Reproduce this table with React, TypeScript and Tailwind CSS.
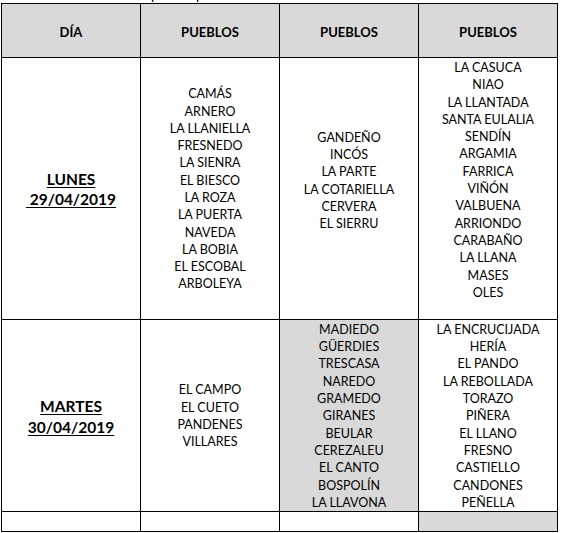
import React from "react";

const c2 = ["CAMÁS","ARNERO","LA LLANIELLA","FRESNEDO","LA SIENRA","EL BIESCO","LA ROZA","LA PUERTA","NAVEDA","LA BOBIA","EL ESCOBAL","ARBOLEYA"];
const c3 = ["GANDEÑO","INCÓS","LA PARTE","LA COTARIELLA","CERVERA","EL SIERRU"];
const c4 = ["LA CASUCA","NIAO","LA LLANTADA","SANTA EULALIA","SENDÍN","ARGAMIA","FARRICA","VIÑÓN","VALBUENA","ARRIONDO","CARABAÑO","LA LLANA","MASES","OLES"];
const d2 = ["EL CAMPO","EL CUETO","PANDENES","VILLARES"];
const d3 = ["MADIEDO","GÜERDIES","TRESCASA","NAREDO","GRAMEDO","GIRANES","BEULAR","CEREZALEU","EL CANTO","BOSPOLÍN","LA LLAVONA"];
const d4 = ["LA ENCRUCIJADA","HERÍA","EL PANDO","LA REBOLLADA","TORAZO","PIÑERA","EL LLANO","FRESNO","CASTIELLO","CANDONES","PEÑELLA"];

function List({ items }: { items: string[] }) {
  return (
    <>
      {items.map((t) => (
        <div key={t} className="leading-[17.3px] whitespace-nowrap">{t}</div>
      ))}
    </>
  );
}

const cell = "border-r border-b border-black flex flex-col items-center text-center";

export default function App() {
  return (
    <div className="w-[561px] h-[533px] bg-white text-black overflow-hidden" style={{ fontFamily: "Lato, 'Liberation Sans', sans-serif" }}>
      <div className="h-[3px] overflow-hidden">
        <div className="-mt-[12px] pl-[151px] text-[14px] leading-[14px] whitespace-nowrap">por los pueblos</div>
      </div>
      <div className="ml-[1px] w-[557px] border-t border-l border-black grid grid-cols-[139px_139px_139px_139px] grid-rows-[54px_262px_192px_20px] text-[12.5px]">
        <div className={`${cell} justify-center pt-[4px] bg-[#d9d9d9] font-bold text-[13px]`}>DÍA</div>
        <div className={`${cell} justify-center pt-[4px] bg-[#d9d9d9] font-bold text-[13px]`}>PUEBLOS</div>
        <div className={`${cell} justify-center pt-[4px] bg-[#d9d9d9] font-bold text-[13px]`}>PUEBLOS</div>
        <div className={`${cell} justify-center pt-[4px] bg-[#d9d9d9] font-bold text-[13px]`}>PUEBLOS</div>

        <div className={`${cell} justify-center font-bold text-[15.5px] leading-[20px]`}>
          <div className="underline underline-offset-2">LUNES</div>
          <div className="underline underline-offset-2 whitespace-pre"> 29/04/2019</div>
        </div>
        <div className={`${cell} justify-center pt-[1px]`}><List items={c2} /></div>
        <div className={`${cell} justify-center pb-[16px]`}><List items={c3} /></div>
        <div className={`${cell} justify-start pt-[1px]`}><List items={c4} /></div>

        <div className={`${cell} justify-center font-bold text-[15.5px] leading-[21px] pt-[3px]`}>
          <div className="underline underline-offset-2">MARTES</div>
          <div className="underline underline-offset-2">30/04/2019</div>
        </div>
        <div className={`${cell} justify-center pt-[1px]`}><List items={d2} /></div>
        <div className={`${cell} justify-center pt-[1px] bg-[#d9d9d9]`}><List items={d3} /></div>
        <div className={`${cell} justify-center pt-[1px]`}><List items={d4} /></div>

        <div className={cell}></div>
        <div className={cell}></div>
        <div className={cell}></div>
        <div className={`${cell} bg-[#d9d9d9]`}></div>
      </div>
    </div>
  );
}
